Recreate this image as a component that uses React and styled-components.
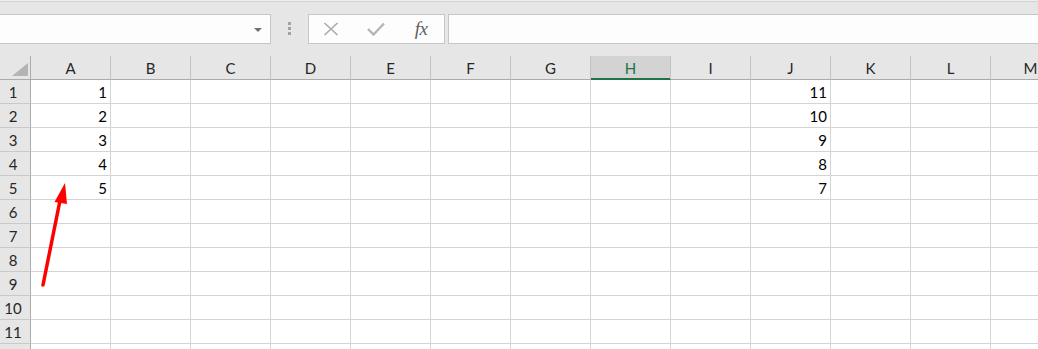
import React from "react";
import styled, { createGlobalStyle } from "styled-components";

const Global = createGlobalStyle`
  html, body { margin: 0; padding: 0; background: #e6e6e6; overflow: hidden; }
  body { font-family: Lato, "Noto Sans", sans-serif; }
  * { box-sizing: border-box; }
`;

const Page = styled.div`
  position: relative;
  width: 1038px;
  height: 349px;
  overflow: hidden;
  background: #e6e6e6;
`;

const TopEdge = styled.div`
  height: 1px;
  background: #efefef;
`;

const Toolbar = styled.div`
  display: flex;
  align-items: flex-start;
  height: 55px;
  padding-top: 12px;
  border-top: 1px solid #d2d2d2;
`;

const Field = styled.div`
  height: 30px;
  border: 1px solid #c6c6c6;
  background: #fdfdfd;
  display: flex;
  align-items: center;
`;

const NameBox = styled(Field)`
  margin-left: -1px;
  width: 272px;
  justify-content: flex-end;
  padding-right: 8px;
`;

const Caret = styled.div`
  width: 0;
  height: 0;
  border-left: 4px solid transparent;
  border-right: 4px solid transparent;
  border-top: 4px solid #707070;
  margin-top: 1px;
`;

const Grip = styled.div`
  margin-left: 17px;
  margin-top: 8px;
  display: flex;
  flex-direction: column;
  gap: 2px;
`;

const GripDot = styled.div`
  width: 3px;
  height: 3px;
  background: #a3a3a3;
`;

const ButtonBox = styled(Field)`
  margin-left: 17px;
  width: 137px;
  padding-left: 14px;
`;

const IconButton = styled.div`
  width: ${(p) => p.$w}px;
  margin-left: ${(p) => p.$gap || 0}px;
  display: flex;
  align-items: center;
  justify-content: center;
  height: 28px;
`;

const Fx = styled.span`
  font-family: "Liberation Serif", "DejaVu Serif", serif;
  font-style: italic;
  font-size: 19px;
  color: #5f5f5f;
  letter-spacing: -0.5px;
  margin-top: -1px;
`;

const FormulaBox = styled(Field)`
  margin-left: 3px;
  flex: 1;
  margin-right: -2px;
`;

const Sheet = styled.div`
  display: grid;
  grid-template-columns: 31px repeat(13, 80px);
  grid-auto-rows: 24px;
  width: 1071px;
  background: #fff;
`;

const Corner = styled.div`
  background: #e6e6e6;
  border-right: 1px solid #ababab;
  border-bottom: 1px solid #ababab;
  display: flex;
  justify-content: flex-end;
  align-items: flex-end;
  padding: 0 2px 3px 0;
`;

const ColHeader = styled.div`
  background: ${(p) => (p.$active ? "#d3d3d3" : "#e6e6e6")};
  color: ${(p) => (p.$active ? "#217346" : "#262626")};
  border-right: 1px solid #c3c3c3;
  border-bottom: 1px solid ${(p) => (p.$active ? "#217346" : "#ababab")};
  box-shadow: ${(p) => (p.$active ? "inset 0 -1px 0 #217346" : "none")};
  font-size: 15px;
  line-height: 24px;
  text-align: center;
`;

const RowHeader = styled.div`
  background: #e6e6e6;
  color: #262626;
  border-right: 1px solid #ababab;
  border-bottom: 1px solid #c9c9c9;
  font-size: 15px;
  line-height: 24px;
  text-align: center;
  padding-right: 4px;
`;

const Cell = styled.div`
  background: #fff;
  border-right: 1px solid #d4d4d4;
  border-bottom: 1px solid #d4d4d4;
  font-size: 15px;
  line-height: 24px;
  text-align: right;
  padding-right: 3px;
  color: #000;
`;

const ArrowLayer = styled.svg`
  position: absolute;
  left: 0;
  top: 0;
  pointer-events: none;
`;

const columns = ["A", "B", "C", "D", "E", "F", "G", "H", "I", "J", "K", "L", "M"];
const data = {
  A: ["1", "2", "3", "4", "5"],
  J: ["11", "10", "9", "8", "7"],
};

export default function App() {
  const rows = Array.from({ length: 12 }, (_, i) => i + 1);
  return (
    <Page>
      <Global />
      <TopEdge />
      <Toolbar>
        <NameBox>
          <Caret />
        </NameBox>
        <Grip>
          <GripDot />
          <GripDot />
          <GripDot />
        </Grip>
        <ButtonBox>
          <IconButton $w={16}>
            <svg width="16" height="14" viewBox="0 0 16 14">
              <path d="M1.5 1 L14.5 13 M14.5 1 L1.5 13" stroke="#a9a9a9" strokeWidth="1.6" fill="none" />
            </svg>
          </IconButton>
          <IconButton $w={30} $gap={22}>
            <svg width="18" height="14" viewBox="0 0 18 14">
              <path d="M1 7 L6.5 12.5 L17 1.5" stroke="#b5b5b5" strokeWidth="2.4" fill="none" />
            </svg>
          </IconButton>
          <IconButton $w={26} $gap={17}>
            <Fx>fx</Fx>
          </IconButton>
        </ButtonBox>
        <FormulaBox />
      </Toolbar>
      <Sheet>
        <Corner>
          <svg width="16" height="13" viewBox="0 0 16 13">
            <polygon points="16,0 16,13 0,13" fill="#b4b4b4" />
          </svg>
        </Corner>
        {columns.map((c) => (
          <ColHeader key={c} $active={c === "H"}>
            {c}
          </ColHeader>
        ))}
        {rows.map((r) => (
          <React.Fragment key={r}>
            <RowHeader>{r < 12 ? r : ""}</RowHeader>
            {columns.map((c) => (
              <Cell key={c}>{data[c] ? data[c][r - 1] : ""}</Cell>
            ))}
          </React.Fragment>
        ))}
      </Sheet>
      <ArrowLayer width="1038" height="349" viewBox="0 0 1038 349">
        <line x1="43" y1="285" x2="60.5" y2="198" stroke="#ff0000" strokeWidth="3.5" strokeLinecap="round" />
        <polygon points="65,183 54.5,202 67,204" fill="#ff0000" />
      </ArrowLayer>
    </Page>
  );
}
